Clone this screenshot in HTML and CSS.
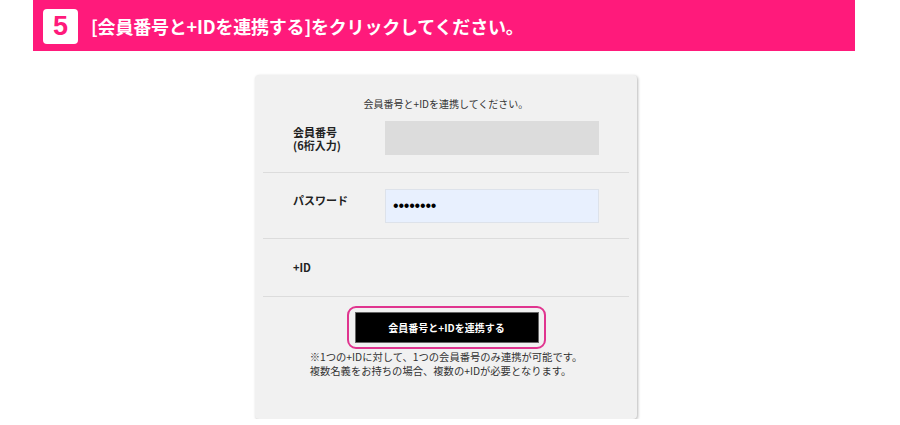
FILE: index.html
```html
<!DOCTYPE html>
<html>
	<head>
		<meta charset="UTF-8">
		<title>会員番号と+IDを連携</title>
		<link rel="stylesheet" href="styles.css">
	</head>
	<body>
		<div class="wrap">
			<!--ステップ見出し-->
			<div class="step">
				<span class="stepNum">5</span>
				<h2 class="stepTit">[会員番号と+IDを連携する]をクリックしてください。</h2>
			</div>

			<!--連携フォーム-->
			<div class="card">
				<p class="lead">会員番号と+IDを連携してください。</p>
				<div class="row first">
					<div class="label">会員番号<br>(6桁入力)</div>
					<div class="field gray"></div>
				</div>
				<div class="row">
					<div class="label">パスワード</div>
					<div class="field blue">••••••••</div>
				</div>
				<div class="row plain">
					<div class="label">+ID</div>
				</div>
				<div class="btnArea">
					<div class="btnRing">
						<a class="btn" href="#">会員番号と+IDを連携する</a>
					</div>
				</div>
				<div class="note">
					<p>※1つの+IDに対して、1つの会員番号のみ連携が可能です。<br>複数名義をお持ちの場合、複数の+IDが必要となります。</p>
				</div>
			</div>
		</div>
	</body>
</html>
```

FILE: styles.css
```css
*{
	margin:0;
	padding:0;
	list-style: none;
	box-sizing: border-box;
}
body{
	background: #fff;
	color: #222;
	font-family: "Noto Sans CJK JP", "Noto Sans", sans-serif;
}
.wrap{
	width: 822px;
	margin-left: 33px;
}

/* 見出し */
.step{
	height: 51px;
	background: #ff1a7b;
	display: flex;
	align-items: center;
	padding-left: 10px;
}
.stepNum{
	width: 35px;
	height: 35px;
	background: #fff;
	border-radius: 4px;
	color: #ff1a7b;
	font-family: "Liberation Sans", sans-serif;
	font-weight: bold;
	font-size: 27px;
	line-height: 35px;
	text-align: center;
	margin-top: 2px;
}
.stepTit{
	color: #fff;
	font-size: 18px;
	font-weight: bold;
	margin-left: 13px;
	letter-spacing: -0.2px;
}

/* フォーム */
.card{
	width: 382px;
	margin: 24px 0 0 222px;
	background: #f1f1f1;
	border-radius: 4px;
	box-shadow: 1px 1px 3px rgba(0,0,0,.28);
	padding: 21px 8px 39px;
}
.lead{
	font-size: 10px;
	line-height: 16px;
	text-align: center;
	color: #333;
}
.row{
	display: flex;
	align-items: flex-start;
	padding: 16px 30px 15px;
	border-bottom: 1px solid #dcdcdc;
}
.row.first{
	padding-top: 9px;
	padding-bottom: 17px;
}
.row.plain{
	padding: 20px 30px 20px;
	height: 58px;
}
.label{
	width: 92px;
	font-size: 11px;
	font-weight: bold;
	line-height: 13px;
	padding-top: 5px;
	color: #222;
}
.row.plain .label{
	padding-top: 2px;
}
.field{
	width: 214px;
	height: 34px;
	line-height: 32px;
	padding-left: 7px;
	color: #000;
}
.field.gray{
	background: #dcdcdc;
}
.field.blue{
	background: #e8f0fe;
	border: 1px solid #dde2ea;
	font-family: "Liberation Sans", sans-serif;
	font-size: 16px;
	letter-spacing: -0.2px;
}

/* ボタン */
.btnArea{
	display: flex;
	justify-content: center;
	padding-top: 9px;
}
.btnRing{
	width: 199px;
	height: 43px;
	border: 2px solid #e0358f;
	border-radius: 9px;
	padding: 4px 5px 4px 6px;
}
.btn{
	display: block;
	height: 31px;
	background: #000;
	border: 1px solid #666;
	color: #fff;
	font-size: 10px;
	font-weight: bold;
	line-height: 29px;
	text-align: center;
	text-decoration: none;
}
.note{
	text-align: center;
	padding-top: 1px;
}
.note p{
	display: inline-block;
	text-align: left;
	font-size: 10.3px;
	line-height: 14px;
	color: #333;
}
```
